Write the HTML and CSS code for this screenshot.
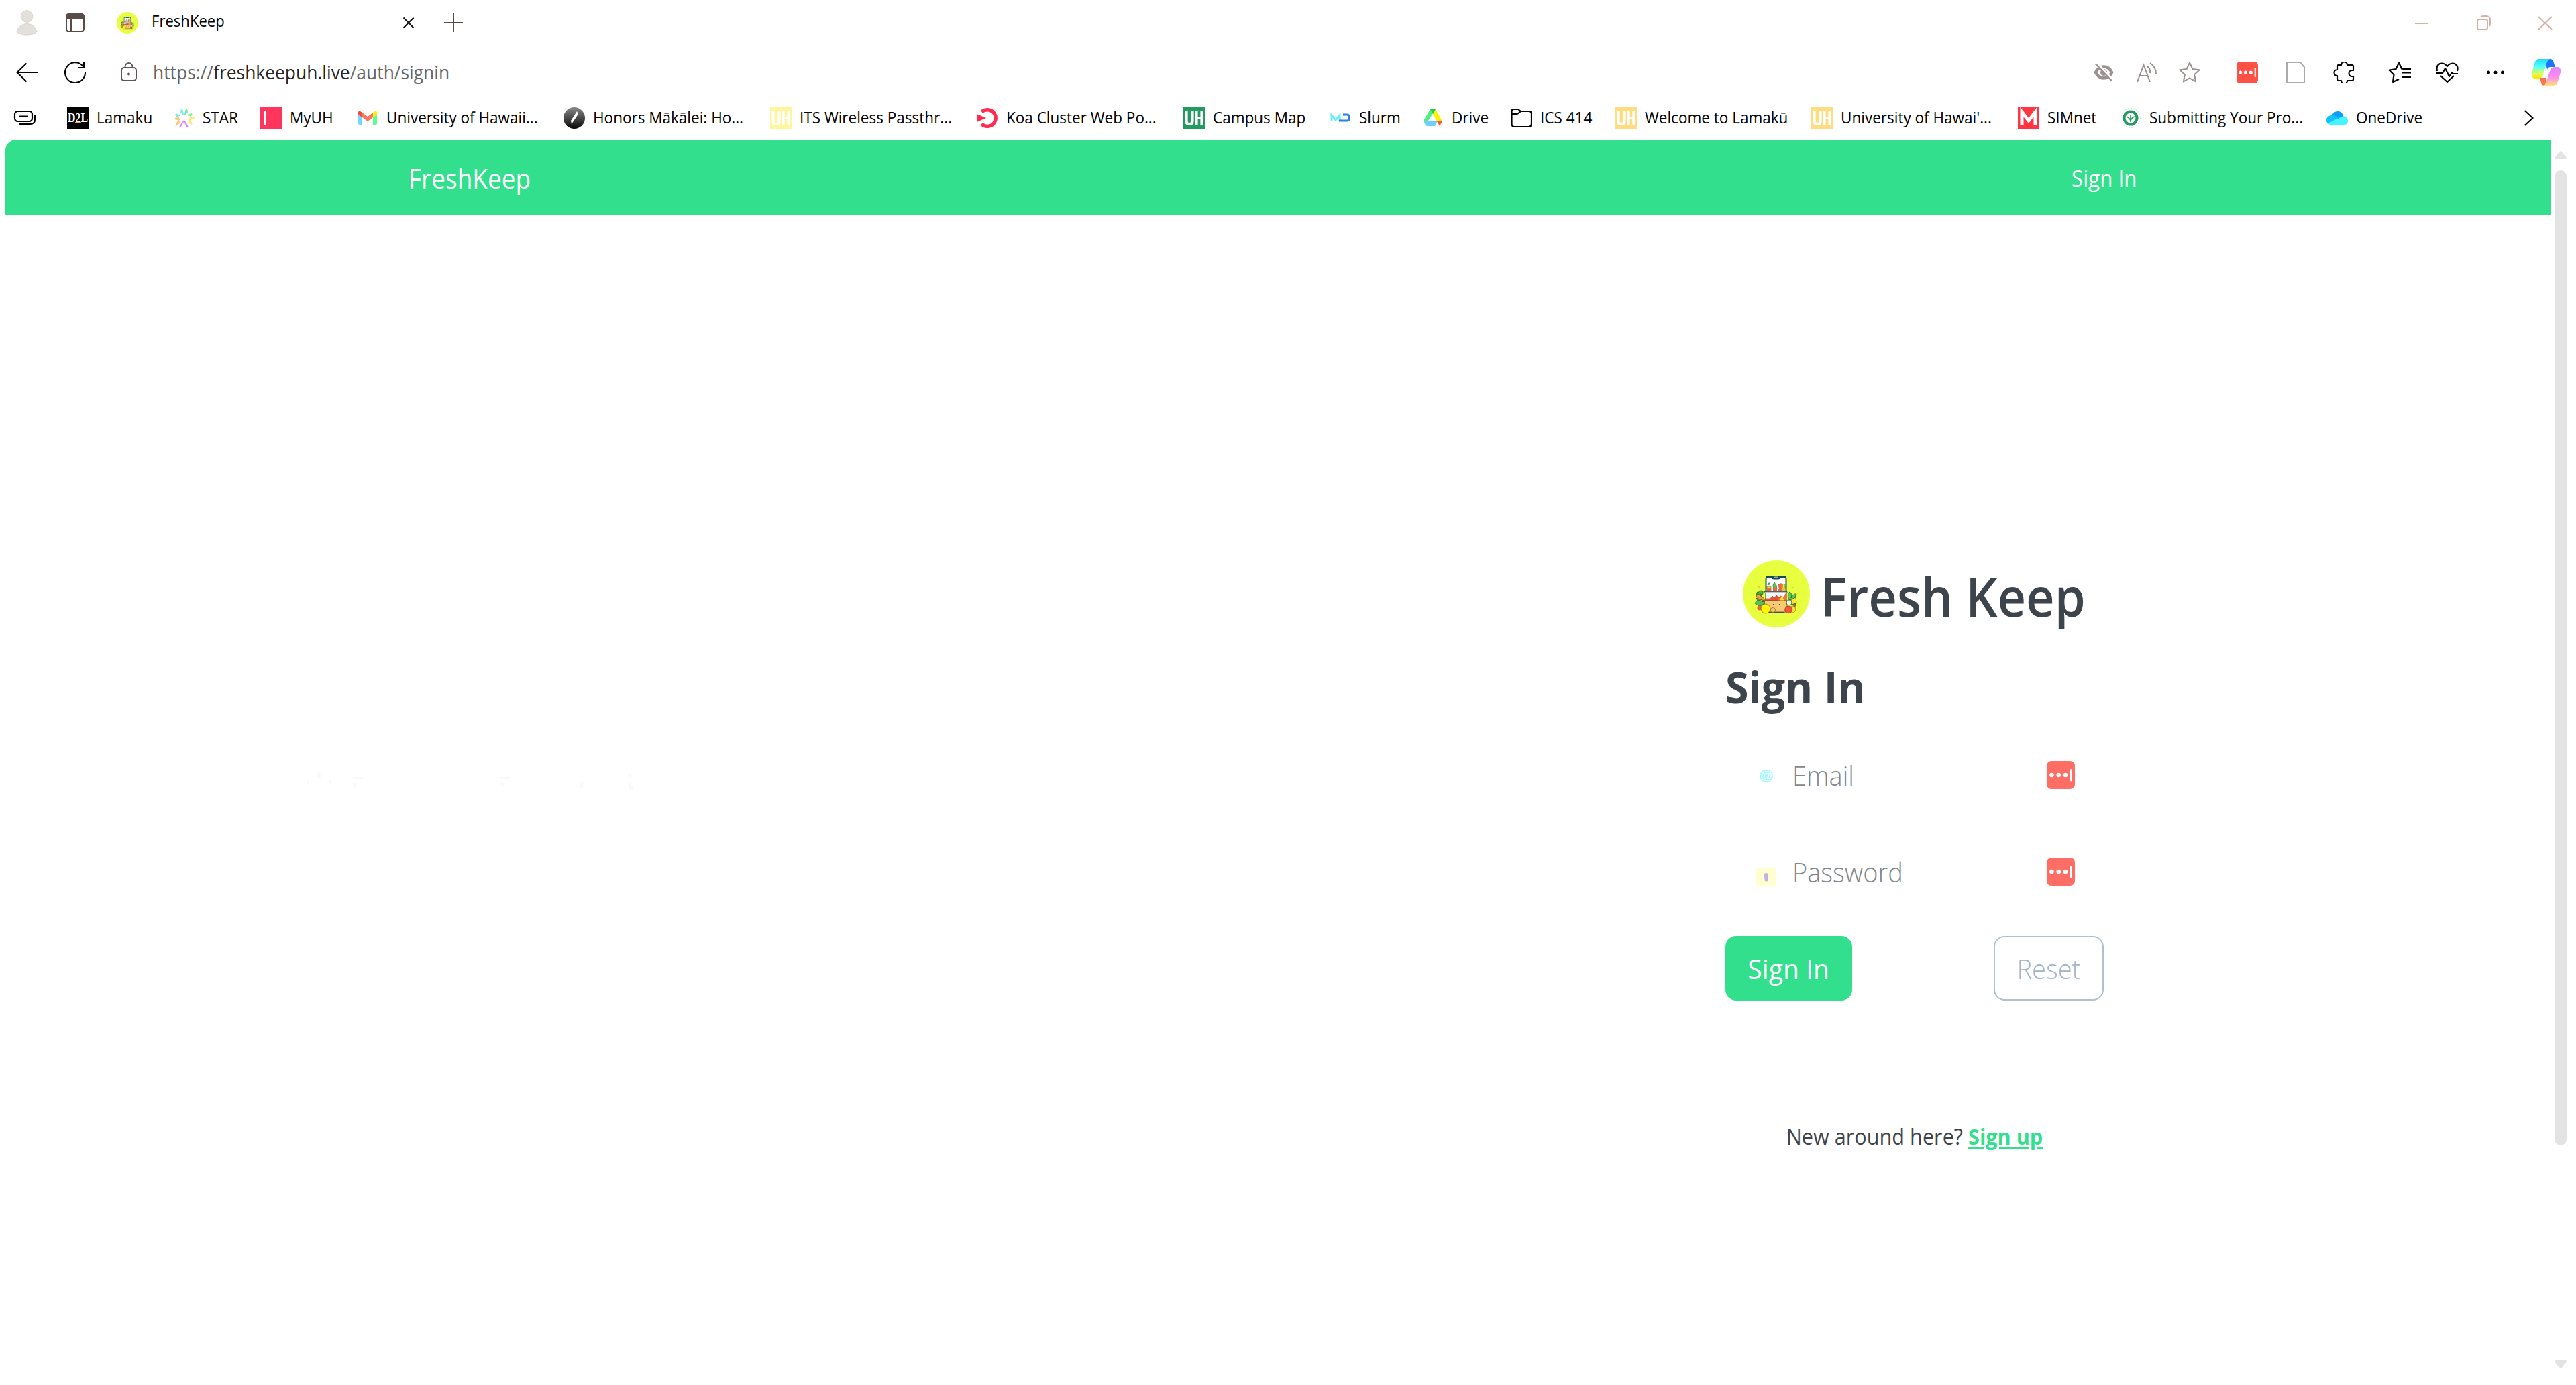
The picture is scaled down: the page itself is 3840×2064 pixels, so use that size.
FILE: index.html
```html
<!DOCTYPE html>
<html lang="en">
<head>
<meta charset="utf-8">
<title>FreshKeep</title>
<link rel="stylesheet" href="styles.css">
</head>
<body>
<svg class="defs" aria-hidden="true">
  <symbol id="logo" viewBox="0 0 100 100">
    <circle cx="50" cy="50" r="50" fill="#e8ff40"/>
    <rect x="34.500" y="24" width="30" height="53" rx="4" fill="#fff" stroke="#174a55" stroke-width="2"/>
    <path d="M36 23.500h27q2 0 2 3H56q-1 2-3 2h-7q-2 0-3-2h-9q0-3 2-3z" fill="#174a55"/>
    <path d="M46 24.500h6v2h-6z" fill="#9ab"/>
    <g stroke="#385b38" stroke-width=".6">
      <path d="M36 39h6v6h-6z" fill="#ffe03b"/><path d="M37 37q0-4 4-3-1 3-4 3zM45 37l2-4 3 4 1 6h-5z" fill="#50c44c"/>
      <path d="M53 37q3-4 7-1l-1 8h-4z" fill="#ff6536"/><path d="M59 36q4-2 4 2v5h-4z" fill="#ffd92e"/>
    </g>
    <path d="M36 42h6v4h-6zM45 41h6v5h-6zM53 43h5v3h-5z" fill="#f46033"/><path d="M58 41h5v5h-5z" fill="#f7c51b"/>
    <path d="M32 46.500h34v2H32z" fill="#b9c4c8" stroke="#174a55" stroke-width=".8"/>
    <path d="M35 49h29v11H35z" fill="#f3fafa"/>
    <path d="M33 60v-3h8l3-4 3 3 3-4 4 3 3-2 3 7z" fill="#ef5130" stroke="#7d3b20" stroke-width=".6"/>
    <path d="M57 60l8-13q2 8-1 13zM52 60l5-8 4 8z" fill="#fd7043"/><path d="M55 60l3-7 4 7z" fill="#ffe52b"/>
    <path d="M32 60h34v17H32z" fill="#f7ca72" stroke="#7a5b34" stroke-width="1"/>
    <circle cx="46" cy="66" r="1.100" fill="#333"/><circle cx="55" cy="66" r="1.100" fill="#333"/>
    <g stroke="#345d29" stroke-width=".8">
      <path d="M22 50q2-7 8-4 1 6-4 7zM22 53q-4-4 0-6l6 4z" fill="#45bb4b"/>
      <path d="M19 51l4-1 9 7v5l-7-2zM20 56l12 4v5l-9-3z" fill="#ff9a36"/>
      <path d="M19 62q4-5 9-1 6 1 2 5-5 4-9 0-4-1-2-4z" fill="#49c85a"/>
      <path d="M69 59q-4-9 1-12 4 2 2 9 3-7 8-6-1 6-6 8z" fill="#54cc55"/>
      <path d="M72 58l7-3 1 9-8 2z" fill="#ffe52c"/>
      <circle cx="69" cy="63" r="4" fill="#f5f8ed"/><path d="M74 66l5-2-1 5z" fill="#f15335"/>
    </g>
    <circle cx="25" cy="71" r="3.500" fill="#f75f3c"/><circle cx="45" cy="74" r="3.500" fill="#ffc76b" stroke="#7a5b34" stroke-width=".7"/>
    <circle cx="34" cy="72" r="7" fill="#fff500" stroke="#806f25" stroke-width=".7"/>
    <circle cx="74" cy="73" r="5" fill="#ffdc35" stroke="#806f25" stroke-width=".7"/>
    <circle cx="68" cy="73.500" r="5.300" fill="#fa5237" stroke="#7e3622" stroke-width=".7"/>
    <circle cx="24" cy="40" r=".8" fill="#ff8a2d"/><circle cx="75" cy="41" r=".8" fill="#ff8a2d"/>
  </symbol>
  <symbol id="passkey" viewBox="0 0 42 42">
    <rect width="42" height="42" rx="7" fill="currentColor"/>
    <circle cx="7.500" cy="21" r="3.300" fill="#fff"/><circle cx="17.800" cy="21" r="3.300" fill="#fff"/><circle cx="28" cy="21" r="3.300" fill="#fff"/>
    <rect x="35" y="12" width="2.800" height="18.500" rx="1.400" fill="#fff"/>
  </symbol>
  <symbol id="uh" viewBox="0 0 32 32">
    <rect width="32" height="32" fill="currentColor"/>
    <path d="M4.500 6v15q0 4 4.500 4t4.500-4V6M19.500 6v20M27.500 6v20M19.500 16h8" fill="none" stroke="#fff" stroke-width="4.200"/>
  </symbol>
</svg>

<header class="browser">
  <div class="tabs">
    <svg width="32" height="40" viewBox="0 0 32 40" fill="#e3dfdb" stroke="#d9d2cd"><circle cx="16" cy="10.500" r="8.800"/><path d="M1 33q4-11.500 15-11.500T31 33q-4 5-15 5T1 33z"/></svg>
    <svg width="28" height="30" viewBox="0 0 28 30"><rect x="1" y="2" width="26" height="26" rx="4" fill="none" stroke="#5a4b48" stroke-width="2"/><path d="M0 9V6q0-5 5-5h18q5 0 5 5v3z" fill="#5a4b48"/><path d="M8 9v19" stroke="#5a4b48" stroke-width="2"/></svg>
    <svg width="32" height="32"><use href="#logo"/></svg>
    <span class="fit tab-title">FreshKeep</span>
    <svg width="18" height="18" viewBox="0 0 18 18" stroke="#111" stroke-width="2"><path d="M1.500 1.500l15 15M16.500 1.500l-15 15"/></svg>
    <svg width="28" height="28" viewBox="0 0 28 28" stroke="#5a4b48" stroke-width="2"><path d="M14 0v28M0 14h28"/></svg>
    <svg width="20" height="22" viewBox="0 0 20 22" stroke="#d8b0ab" stroke-width="2"><path d="M0 12h20"/></svg>
    <svg width="21" height="22" viewBox="0 0 21 22" fill="none" stroke="#d8b0ab" stroke-width="2"><rect x="1" y="6" width="15" height="15" rx="2.500"/><path d="M6 2.500Q7 1 10 1h4q6 0 6 6v5q0 3-1 4"/></svg>
    <svg width="22" height="22" viewBox="0 0 22 22" stroke="#d8b0ab" stroke-width="2"><path d="M1 2l20 19M21 2L1 21"/></svg>
  </div>

  <div class="toolbar">
    <svg width="32" height="30" viewBox="0 0 32 30" fill="none" stroke="#000" stroke-width="2"><path d="M32 15H1M15.500 1.500L1.500 15l14 13.500"/></svg>
    <svg width="32" height="32" viewBox="0 0 32 32" fill="none" stroke="#000" stroke-width="2"><path d="M31 15.500A15 15 0 1 1 27 6l2 3M29 0v9h-9"/></svg>
    <svg width="28" height="30" viewBox="0 0 28 30" fill="none" stroke="#5f5655" stroke-width="2"><rect x="3" y="8" width="22" height="19" rx="4"/><path d="M8.500 8V6.500a5.500 5.500 0 0 1 11 0V8"/><circle cx="14" cy="17.500" r="1" fill="#5f5655"/></svg>
    <span class="fit url">https://<b>freshkeepuh.live</b>/auth/signin</span>
    <svg width="30" height="28" viewBox="0 0 30 28" fill="none" stroke="#9c9191"><path d="M3 14q4-8.500 12-8.500T27 14q-4 8.500-12 8.500T3 14z" stroke-width="4.500"/><circle cx="15" cy="14" r="5" fill="#9c9191" stroke="none"/><path d="M5 1l24 25" stroke="#fff" stroke-width="4"/><path d="M3 1.500l24 25" stroke-width="2.500"/></svg>
    <svg width="32" height="30" viewBox="0 0 32 30" fill="none" stroke="#9c9191" stroke-width="2"><path d="M2 29L11.500 4 21 29M5.500 20h12M17 6q5 4 4 10M21 1q9 6 9 17"/></svg>
    <svg width="32" height="32" viewBox="0 0 32 32" fill="none" stroke="#9c9191" stroke-width="2" stroke-linejoin="round"><path d="M16 1.500l4.400 9.500 10.300 1.200-7.600 7 2 10.300L16 24.400l-9.100 5.100 2-10.300-7.600-7L11.600 11z"/></svg>
    <svg class="red-tool" width="32" height="32"><use href="#passkey"/></svg>
    <svg width="32" height="32" viewBox="0 0 32 32" fill="none" stroke="#aaa" stroke-width="2"><path d="M3 1h20l6 7v22q0 1-1 1H4q-1 0-1-1z"/></svg>
    <svg width="32" height="32" viewBox="0 0 32 32" fill="none" stroke="#000" stroke-width="2.200" stroke-linejoin="round"><path d="M12 5a4.500 4.500 0 0 1 9 0h7q2 0 2 2v6h-2a4.500 4.500 0 0 0 0 9h2v4q0 2-2 2h-7a4.500 4.500 0 0 1-9 0H8q-2 0-2-2v-5a4.500 4.500 0 0 1 0-9V7q0-2 2-2z"/></svg>
    <svg width="34" height="32" viewBox="0 0 34 32" fill="none" stroke="#000" stroke-width="2.200" stroke-linejoin="round"><path d="M22 11l-2-.5L16 1.500 11.500 11 1.500 12.500l7 7L7 30l9-4M22 11h12M20 16.500h14M20 23h14"/></svg>
    <svg width="36" height="30" viewBox="0 0 36 30" fill="none" stroke="#000" stroke-width="2.200" stroke-linejoin="round"><path d="M3 13q-2-8 4-11 6-2 11 4 5-6 11-4 6 3 4 11M2 16h9l4-7 6 12 4-6 2 2h7M8 20l10 9 10-9"/></svg>
    <svg width="32" height="8" viewBox="0 0 32 8"><circle cx="5.500" cy="4" r="2.500"/><circle cx="16" cy="4" r="2.500"/><circle cx="26.500" cy="4" r="2.500"/></svg>
    <svg width="46" height="40" viewBox="0 0 46 40">
      <defs>
        <linearGradient id="cp1" x1="0" y1="0" x2="0" y2="1"><stop offset="0" stop-color="#20d8ff"/><stop offset=".4" stop-color="#55ffff"/><stop offset=".75" stop-color="#e0ff50"/><stop offset="1" stop-color="#ffe000"/></linearGradient>
        <linearGradient id="cp2" x1="0" y1="0" x2="0" y2="1"><stop offset="0" stop-color="#d78bff"/><stop offset=".5" stop-color="#ff86f4"/><stop offset="1" stop-color="#ffe478"/></linearGradient>
      </defs>
      <path d="M22 0h8q4 0 5 6l2 6h-7q-4 0-5 4z" fill="#1a76ff"/>
      <path d="M14 28h10l-2 12h-1q-4 0-5-5z" fill="#ff7448"/>
      <path d="M12 0h18q-4 0-6 7l-5 16q-2 6-7 6H7q-6 0-5-8L6 7q2-7 6-7z" fill="url(#cp1)"/>
      <path d="M34 40H18q4 0 6-7l5-15q2-6 7-6h4q6 0 5 8l-4 13q-2 7-7 7z" fill="url(#cp2)"/>
    </svg>
  </div>

  <nav class="bookmarks">
    <svg width="34" height="24" viewBox="0 0 34 24" fill="none" stroke="#000" stroke-width="2.200"><rect x="2" y="2" width="26" height="15" rx="4.500"/><path d="M9 9.500h12M8 21h17q7 0 7-7V8"/></svg>
    <a><svg width="32" height="32" viewBox="0 0 32 32"><rect width="32" height="32"/><text x="1" y="22" textLength="30" lengthAdjust="spacingAndGlyphs" class="d2l">D2L</text><path d="M12 22h9v2h-9z" fill="#ffa31a"/></svg><span class="fit">Lamaku</span></a>
    <a><svg width="32" height="32" viewBox="0 0 32 32" fill="none" stroke-width="2.300"><path d="M15 11L13 3l-1 5M10 13l-6-3 3 4" stroke="#7feaff"/><path d="M18 11l2-8 1 5M22 12l6-2-3 3" stroke="#74f09a"/><path d="M9 16l-6 1 6 1-3 7 4-3" stroke="#ffc56b"/><path d="M24 15l6 1-6 3 4 6-5-3" stroke="#ffe57a"/><path d="M10 30l5-9 2 0 5 9" stroke="#dc8aff"/></svg><span class="fit">STAR</span></a>
    <a><svg width="32" height="32" viewBox="0 0 32 32"><rect width="32" height="32" fill="#ff355e"/><path d="M5 5h4v22H5z" fill="#fff"/></svg><span class="fit">MyUH</span></a>
    <a><svg width="32" height="32" viewBox="0 0 32 32"><path d="M2 8l6 5v13H4q-2 0-2-2z" fill="#6bdcff"/><path d="M30 8l-6 5v13h4q2 0 2-2z" fill="#5cff8c"/><path d="M8 8l8 6 8-6v7l-8 6-8-6z" fill="#ff7357"/><path d="M2 11V8q0-3 3-2l3 2v7z" fill="#ff4438"/><path d="M30 11V8q0-3-3-2l-3 2v7z" fill="#fff200"/></svg><span class="fit">University of Hawaii...</span></a>
    <a><svg width="32" height="32" viewBox="0 0 32 32"><defs><linearGradient id="hm" x1="0" y1="0" x2="0" y2="1"><stop offset="0" stop-color="#888"/><stop offset="1" stop-color="#080808"/></linearGradient></defs><circle cx="16" cy="16" r="16" fill="url(#hm)"/><path d="M20 6l2 4-6 9-4 6-1-5z" fill="#fff"/></svg><span class="fit">Honors Mākālei: Ho...</span></a>
    <a><svg class="uh-lemon" width="32" height="32"><use href="#uh"/></svg><span class="fit">ITS Wireless Passthr...</span></a>
    <a><svg width="32" height="32" viewBox="0 0 32 32"><path d="M6 5q5-3 10-3a14 14 0 1 1-10 24" fill="none" stroke="#ff2a4d" stroke-width="6" transform="translate(2 2) scale(.88)"/><path d="M0 10l14 6-14 6z" fill="#ff2a4d"/></svg><span class="fit">Koa Cluster Web Po...</span></a>
    <a><svg class="uh-green" width="32" height="32"><use href="#uh"/></svg><span class="fit">Campus Map</span></a>
    <a><svg width="32" height="32" viewBox="0 0 32 32" fill="none" stroke-width="3"><path d="M3 21V12l6 7 6-7v9" stroke="#66f0ff"/><path d="M14 20h12q3 0 3-3v-3q0-3-3-3h-6" stroke="#2b82dc"/></svg><span class="fit">Slurm</span></a>
    <a><svg width="32" height="32" viewBox="0 0 32 32"><path d="M12 3h8L9 20l-6 2-1-2z" fill="#4ff083"/><path d="M12 3h8l10 18h-8z" fill="#fff200"/><path d="M12 3h8l-4 7z" fill="#22c768"/><path d="M2 21h21l-4 7H6z" fill="#70cfff"/><path d="M22 21h8l-4 7z" fill="#ff5544"/><path d="M15.500 12l-6 9h12z" fill="#fff"/></svg><span class="fit">Drive</span></a>
    <a><svg width="32" height="32" viewBox="0 0 32 32" fill="none" stroke="#000" stroke-width="2.200"><path d="M1.500 25V6q0-3 3-3h6q1 0 2 1l2.500 2H27q4 0 4 4v14q0 5-5 5H6q-4.500 0-4.500-4zM2 10h7q2 0 3-1.500L15 6"/></svg><span class="fit">ICS 414</span></a>
    <a><svg class="uh-gold" width="32" height="32"><use href="#uh"/></svg><span class="fit">Welcome to Lamakū</span></a>
    <a><svg class="uh-gold" width="32" height="32"><use href="#uh"/></svg><span class="fit">University of Hawai'...</span></a>
    <a><svg width="32" height="32" viewBox="0 0 32 32"><rect width="32" height="32" fill="#ff3543"/><path d="M6 26V7l10 13L26 7v19" fill="none" stroke="#fff" stroke-width="5"/></svg><span class="fit">SIMnet</span></a>
    <a><svg width="32" height="32" viewBox="0 0 32 32" fill="none"><circle cx="16" cy="16" r="14.500" stroke="#9fdcb9" stroke-dasharray="1.500 2.500"/><circle cx="16" cy="16" r="9.500" fill="#fff" stroke="#239a5f" stroke-width="4"/><path d="M10 14q6 2 6 8 0-6 6-8M16 22V11" stroke="#239a5f" stroke-width="1.500"/></svg><span class="fit">Submitting Your Pro...</span></a>
    <a><svg width="32" height="32" viewBox="0 0 32 32"><path d="M8 12q3-6 9-6 6 0 8 7 7 1 7 7 0 6-6 6H7q-7 0-7-7 0-6 8-7z" fill="#44f4ff"/><path d="M8 12q3-6 9-6 6 0 8 7l-8 4z" fill="#0c9cff"/><path d="M8 12q4-1 10 4L2 24q-2-2-2-5 0-6 8-7z" fill="#13c1ff"/></svg><span class="fit">OneDrive</span></a>
    <svg width="16" height="24" viewBox="0 0 16 24" fill="none" stroke="#000" stroke-width="2"><path d="M1.500 1L13.500 12 1.500 23"/></svg>
  </nav>
</header>

<div class="viewport">
  <div class="page">
    <div class="navbar"><span class="fit brand">FreshKeep</span><a class="fit-wide nav-link">Sign In</a></div>
    <svg class="hero-trace" width="540" height="80" viewBox="0 0 540 80" fill="#f9f9f9"><path d="M32 40l3.500-16 3.500 16zM17 41l4 3-3 6zM50 42l4 0-1 8zM85 38h17l-2 3H85zM85 47h8l-4 8zM305 38h16l-2 3h-14zM305 47h8l-4 8zM424 45h6q0 11-3 11-3-1-3-11zM498 34h3l-3 7zM498 46l8 12h-8z"/></svg>
    <main class="signin">
      <div class="title-row"><svg width="100" height="100"><use href="#logo"/></svg><h1 class="fit">Fresh Keep</h1></div>
      <h2 class="fit-wide">Sign In</h2>
      <form class="form">
        <div class="field">
          <svg width="32" height="32" viewBox="0 0 32 32"><circle cx="15" cy="17.500" r="9.800" fill="#a5faff"/><text x="15" y="22.500" text-anchor="middle" class="at">@</text></svg>
          <span class="fit label">Email</span>
          <svg class="red-field" width="42" height="42"><use href="#passkey"/></svg>
        </div>
        <div class="field">
          <svg class="lock" width="32" height="28" viewBox="0 0 32 28"><rect x="0" y="1" width="30" height="26" rx="3" fill="#ffffcf"/><path d="M12 14q-1-6 3-6t3 6l-1 6q-2 1-4 0z" fill="#c4aee4"/></svg>
          <span class="fit label">Password</span>
          <svg class="red-field" width="42" height="42"><use href="#passkey"/></svg>
        </div>
        <div class="actions">
          <button type="button" class="btn primary"><span>Sign In</span></button>
          <button type="button" class="btn outline"><span>Reset</span></button>
        </div>
      </form>
      <p class="signup">New around here? <a>Sign up</a></p>
    </main>
  </div>
  <div class="scrollbar">
    <svg width="18" height="12" viewBox="0 0 18 12" fill="#e3e3e3"><path d="M7 1.500q2-3 4 0l7 8.500q0 2-1 2H1q-1 0-1-2z"/></svg>
    <div class="thumb"></div>
    <svg class="down" width="18" height="12" viewBox="0 0 18 12" fill="#e3e3e3"><path d="M7 10.500q2 3 4 0l7-8.500q0-2-1-2H1q-1 0-1 2z"/></svg>
  </div>
</div>
</body>
</html>
```
FILE: styles.css
```css
* { box-sizing: border-box; }
body {
  margin: 0;
  height: 2064px;
  overflow: hidden;
  background: #fff;
  font-family: "Open Sans", "Noto Sans", sans-serif;
  color: #000;
}
svg { display: block; flex: none; }
.defs { position: absolute; width: 0; height: 0; }
.fit, .fit-wide { white-space: nowrap; transform-origin: left center; }
.fit { transform: scaleX(.938); }
.fit-wide { transform: scaleX(.98); }

/* Browser chrome */
.browser { height: 208px; font-size: 24px; }
.tabs, .toolbar, .bookmarks {
  display: grid;
  align-items: center;
  justify-items: start;
}
.tabs {
  height: 64px;
  padding: 4px 0 0 24px;
  grid-template-columns: 74px 76px 52px 374px 62px 2938px 92px 91px auto;
}
.toolbar {
  height: 88px;
  padding-left: 24px;
  grid-template-columns: 72px 82px 50px 2893px 63px 64px 86px 72px 72px 82px 70px 74px 68px auto;
}
.bookmarks {
  height: 48px;
  padding-left: 20px;
  grid-template-columns: 80px 158px 130px 144px 308px 308px 308px 308px 218px 138px 132px 156px 292px 308px 152px 308px 294px auto;
}
.bookmarks a { display: flex; align-items: center; gap: 12px; }
.bookmarks span { line-height: 32px; margin-bottom: 3px; }
.tab-title { margin-bottom: 7px; transform: scaleX(.92); }
.url { font-size: 28px; color: #666; margin-bottom: 2px; transform: scaleX(.943); }
.url b { font-weight: 400; color: #262626; }
.red-tool { color: #ff5046; }
.red-field { color: #ff6e64; }
.uh-lemon { color: #fff59a; }
.uh-green { color: #239a5f; }
.uh-gold { color: #ffdc80; }
.d2l { font: 700 18px "Liberation Serif", serif; fill: #fff; }

/* Viewport */
.viewport { display: flex; height: 1856px; padding-left: 8px; }
.page { width: 3794px; position: relative; }
.navbar {
  height: 112px;
  padding: 2px 615px 0 601px;
  display: flex;
  align-items: center;
  justify-content: space-between;
  background: #31df8d;
  border-top-left-radius: 16px;
  color: #fff;
}
.brand { font-size: 40px; transform: scaleX(.925); }
.nav-link { font-size: 32px; }
.hero-trace { position: absolute; left: 432px; top: 912px; }

/* Sign-in panel */
.signin { width: 564px; margin-left: 2564px; padding-top: 515px; color: #3d444c; }
.title-row { display: flex; height: 104px; padding-left: 26px; gap: 16px; }
h1, h2, p { margin: 0; }
h1 { font-size: 80px; font-weight: 600; line-height: 106px; }
h1.fit { transform: scaleX(.925); }
h2 { margin-top: 45px; font-size: 64px; font-weight: 700; line-height: 80px; }
.form { display: grid; gap: 48px; margin-top: 43px; }
.field {
  display: grid;
  grid-template-columns: 54px 379px 42px;
  align-items: center;
  height: 96px;
  padding-left: 46px;
}
.label { font-size: 40px; font-weight: 300; line-height: 60px; padding-top: 2px; color: #80888e; }
.label.fit { transform: scaleX(.95); }
.lock { margin-top: 16px; }
.at { font: 18px "Liberation Sans", sans-serif; fill: #fff; }
.actions { display: flex; justify-content: space-between; }
.btn {
  height: 96px;
  padding: 0;
  border: 0;
  border-radius: 16px;
  font-family: inherit;
  font-size: 40px;
  display: grid;
  place-items: center;
}
.primary { width: 189px; background: #31df8d; color: #fff; }
.outline { width: 164px; background: none; border: 2px solid #b0c0cf; color: #a3b5c6; font-weight: 300; }
.primary span { transform: scaleX(.98); }
.outline span { transform: scaleX(.95); }
.signup {
  margin-top: 179px;
  text-align: center;
  font-size: 32px;
  line-height: 48px;
  transform: scaleX(.958);
}
.signup a { color: #31df8d; font-weight: 700; text-decoration: underline; text-decoration-thickness: 3px; text-underline-offset: 3px; }

/* Scrollbar */
.scrollbar { width: 38px; padding: 17px 0 0 6px; }
.thumb { width: 18px; height: 1453px; margin-top: 17px; border-radius: 9px; background: #e3e3e3; }
.down { margin-top: 320px; }
```
